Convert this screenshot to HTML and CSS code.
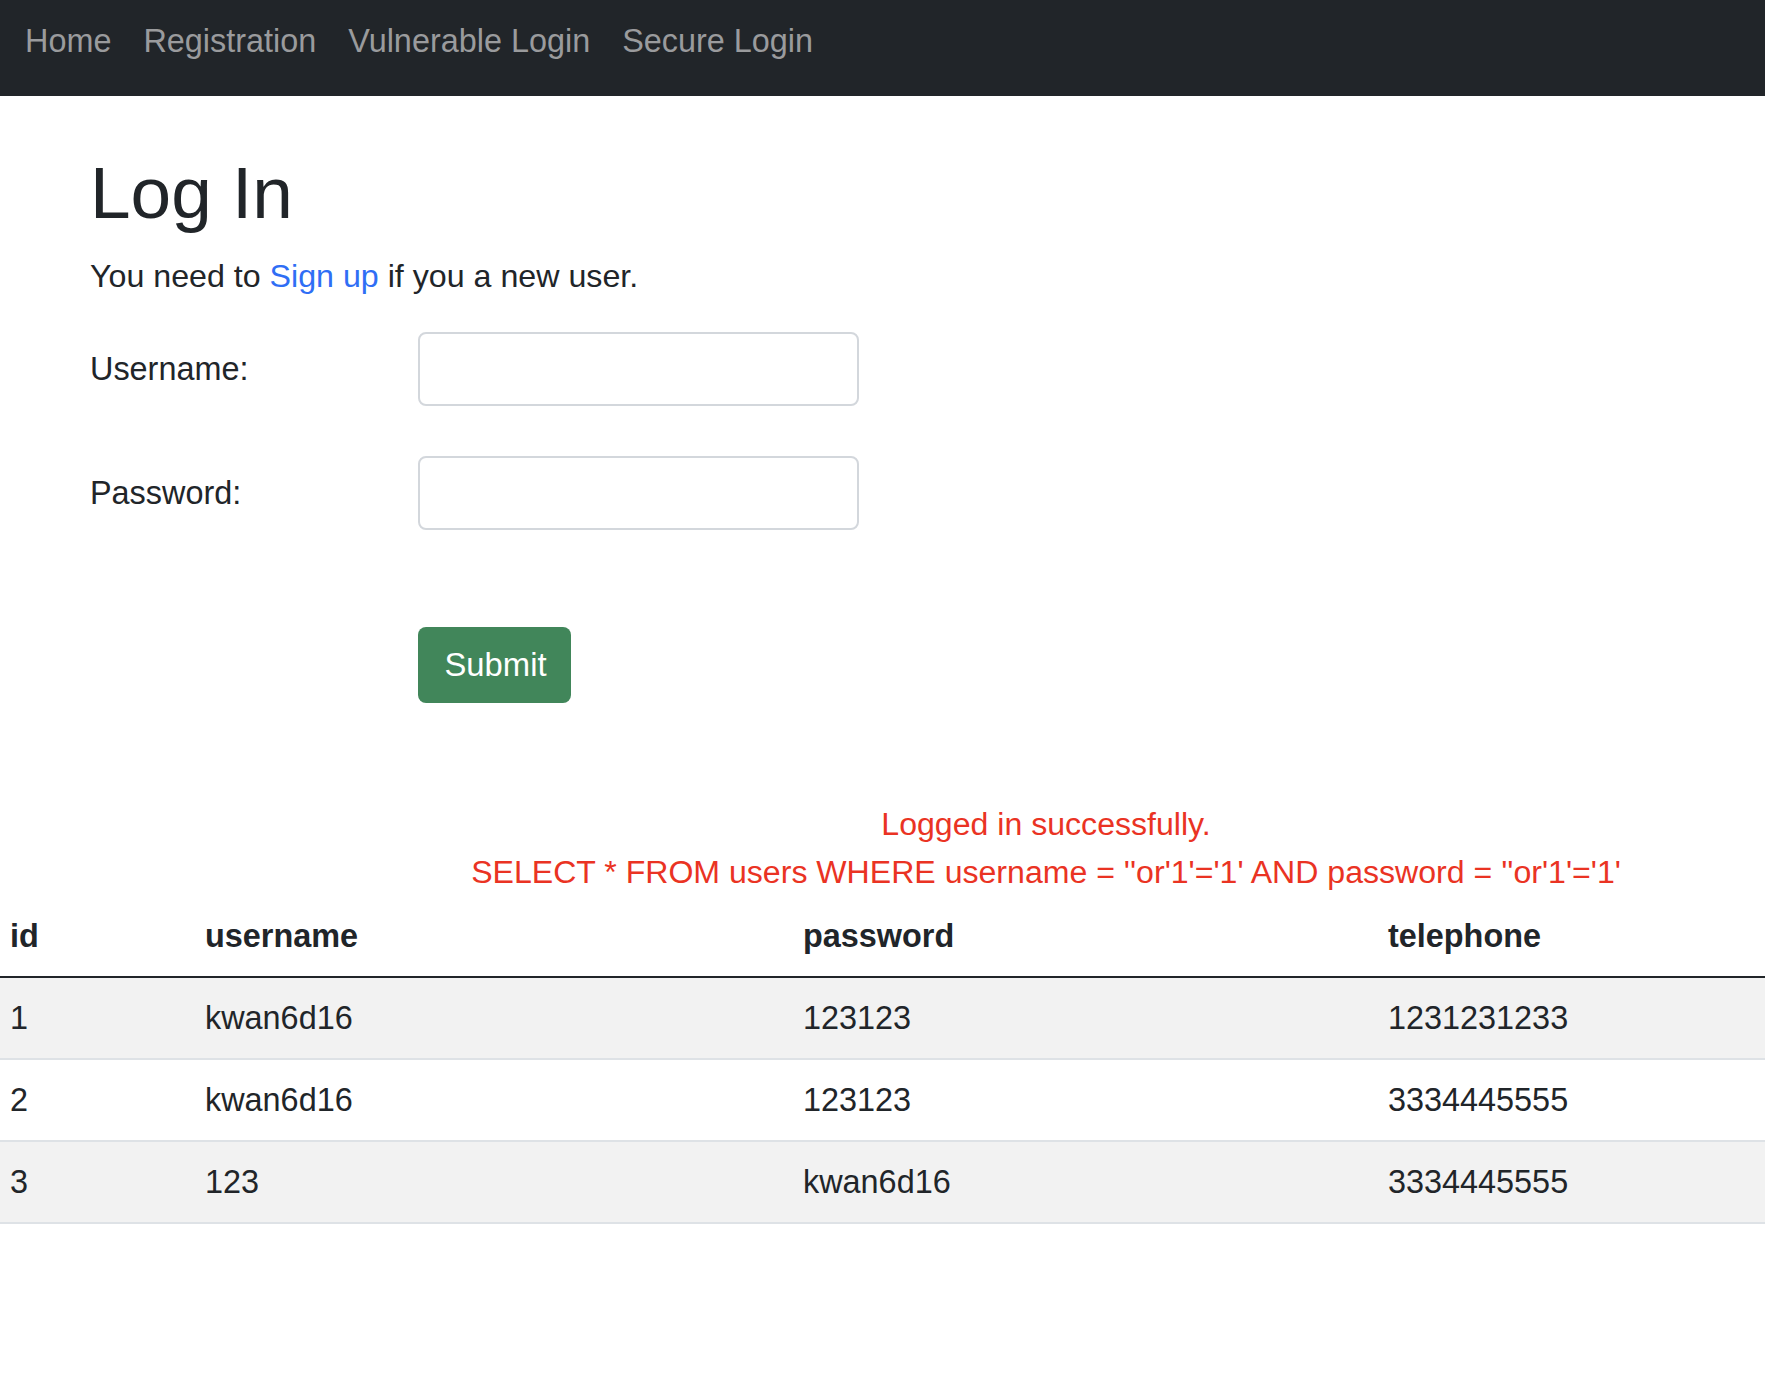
FILE: index.html
```html
<!DOCTYPE html>
<html lang="en">
<head>
<meta charset="utf-8">
<title>Log In</title>
<link rel="stylesheet" href="styles.css">
</head>
<body>
<nav class="navbar">
  <ul class="nav-list">
    <li><a class="nav-link" href="#">Home</a></li>
    <li><a class="nav-link" href="#">Registration</a></li>
    <li><a class="nav-link" href="#">Vulnerable Login</a></li>
    <li><a class="nav-link" href="#">Secure Login</a></li>
  </ul>
</nav>
<main class="container">
  <h1 class="title">Log In</h1>
  <p class="intro">You need to <a class="link" href="#">Sign up</a> if you a new user.</p>
  <form class="login-form">
    <div class="form-row">
      <label class="form-label" for="username">Username:</label>
      <input class="form-input" id="username" type="text">
    </div>
    <div class="form-row form-row-next">
      <label class="form-label" for="password">Password:</label>
      <input class="form-input" id="password" type="password">
    </div>
    <div class="form-actions">
      <button class="btn-submit" type="button">Submit</button>
    </div>
  </form>
</main>
<div class="result-msg">
  <p class="result-line">Logged in successfully.</p>
  <p class="result-line">SELECT * FROM users WHERE username = ''or'1'='1' AND password = ''or'1'='1'</p>
</div>
<table class="users">
  <colgroup>
    <col class="col-id">
    <col class="col-user">
    <col class="col-pass">
    <col class="col-tel">
  </colgroup>
  <thead>
    <tr><th>id</th><th>username</th><th>password</th><th>telephone</th></tr>
  </thead>
  <tbody>
    <tr class="striped"><td>1</td><td>kwan6d16</td><td>123123</td><td>1231231233</td></tr>
    <tr><td>2</td><td>kwan6d16</td><td>123123</td><td>3334445555</td></tr>
    <tr class="striped"><td>3</td><td>123</td><td>kwan6d16</td><td>3334445555</td></tr>
  </tbody>
</table>
</body>
</html>
```
FILE: styles.css
```css
html, body {
  margin: 0;
  padding: 0;
  background: #ffffff;
}
body {
  font-family: "Liberation Sans", Arial, sans-serif;
  font-size: 32.4px;
  line-height: 48px;
  color: #212529;
}
.navbar {
  background: #212529;
  height: 96px;
  box-sizing: border-box;
  padding: 17px 8px 0 9px;
}
.nav-list {
  list-style: none;
  margin: 0;
  padding: 0;
  display: flex;
}
.nav-link {
  display: block;
  padding: 0 16px;
  color: #9a9b9d;
  text-decoration: none;
  line-height: 48px;
}
.container {
  padding-left: 90px;
}
.title {
  margin: 51px 0 14px 0;
  font-size: 73px;
  line-height: 91px;
  font-weight: 500;
}
.intro {
  margin: 0;
  font-size: 32.2px;
}
.link {
  color: #2f6ef5;
  text-decoration: none;
}
.login-form {
  margin-top: 32px;
}
.form-row {
  display: flex;
  align-items: center;
  height: 74px;
}
.form-row-next {
  margin-top: 50px;
}
.form-label {
  width: 328px;
  flex: none;
}
.form-input {
  width: 441px;
  height: 74px;
  box-sizing: border-box;
  border: 2px solid #d3d7dc;
  border-radius: 8px;
  background: #ffffff;
  font: inherit;
  padding: 0 20px;
  margin: 0;
}
.form-actions {
  margin-top: 97px;
  padding-left: 328px;
}
.btn-submit {
  display: block;
  height: 76px;
  width: 153px;
  padding: 0 0 0 2px;
  border: none;
  border-radius: 8px;
  background: #41865a;
  color: #ffffff;
  font: inherit;
  font-size: 32.8px;
  line-height: 48px;
}
.result-msg {
  margin-top: 97px;
  padding-left: 327px;
  text-align: center;
  color: #ea3323;
  font-size: 32.1px;
}
.result-line {
  margin: 0;
  line-height: 48px;
}
.users {
  margin-top: 0;
  width: 100%;
  border-collapse: collapse;
  table-layout: fixed;
}
.col-id { width: 196px; }
.col-user { width: 598px; }
.col-pass { width: 585px; }
.users th,
.users td {
  text-align: left;
  padding: 16px 8px 16px 9px;
  line-height: 48px;
  vertical-align: top;
}
.users td:first-child,
.users th:first-child {
  padding-left: 10px;
}
.users th {
  font-weight: 700;
  border-bottom: 2px solid #212529;
}
.users td {
  border-bottom: 2px solid #dee2e6;
}
.users tr.striped td {
  background: #f2f2f2;
}
```
